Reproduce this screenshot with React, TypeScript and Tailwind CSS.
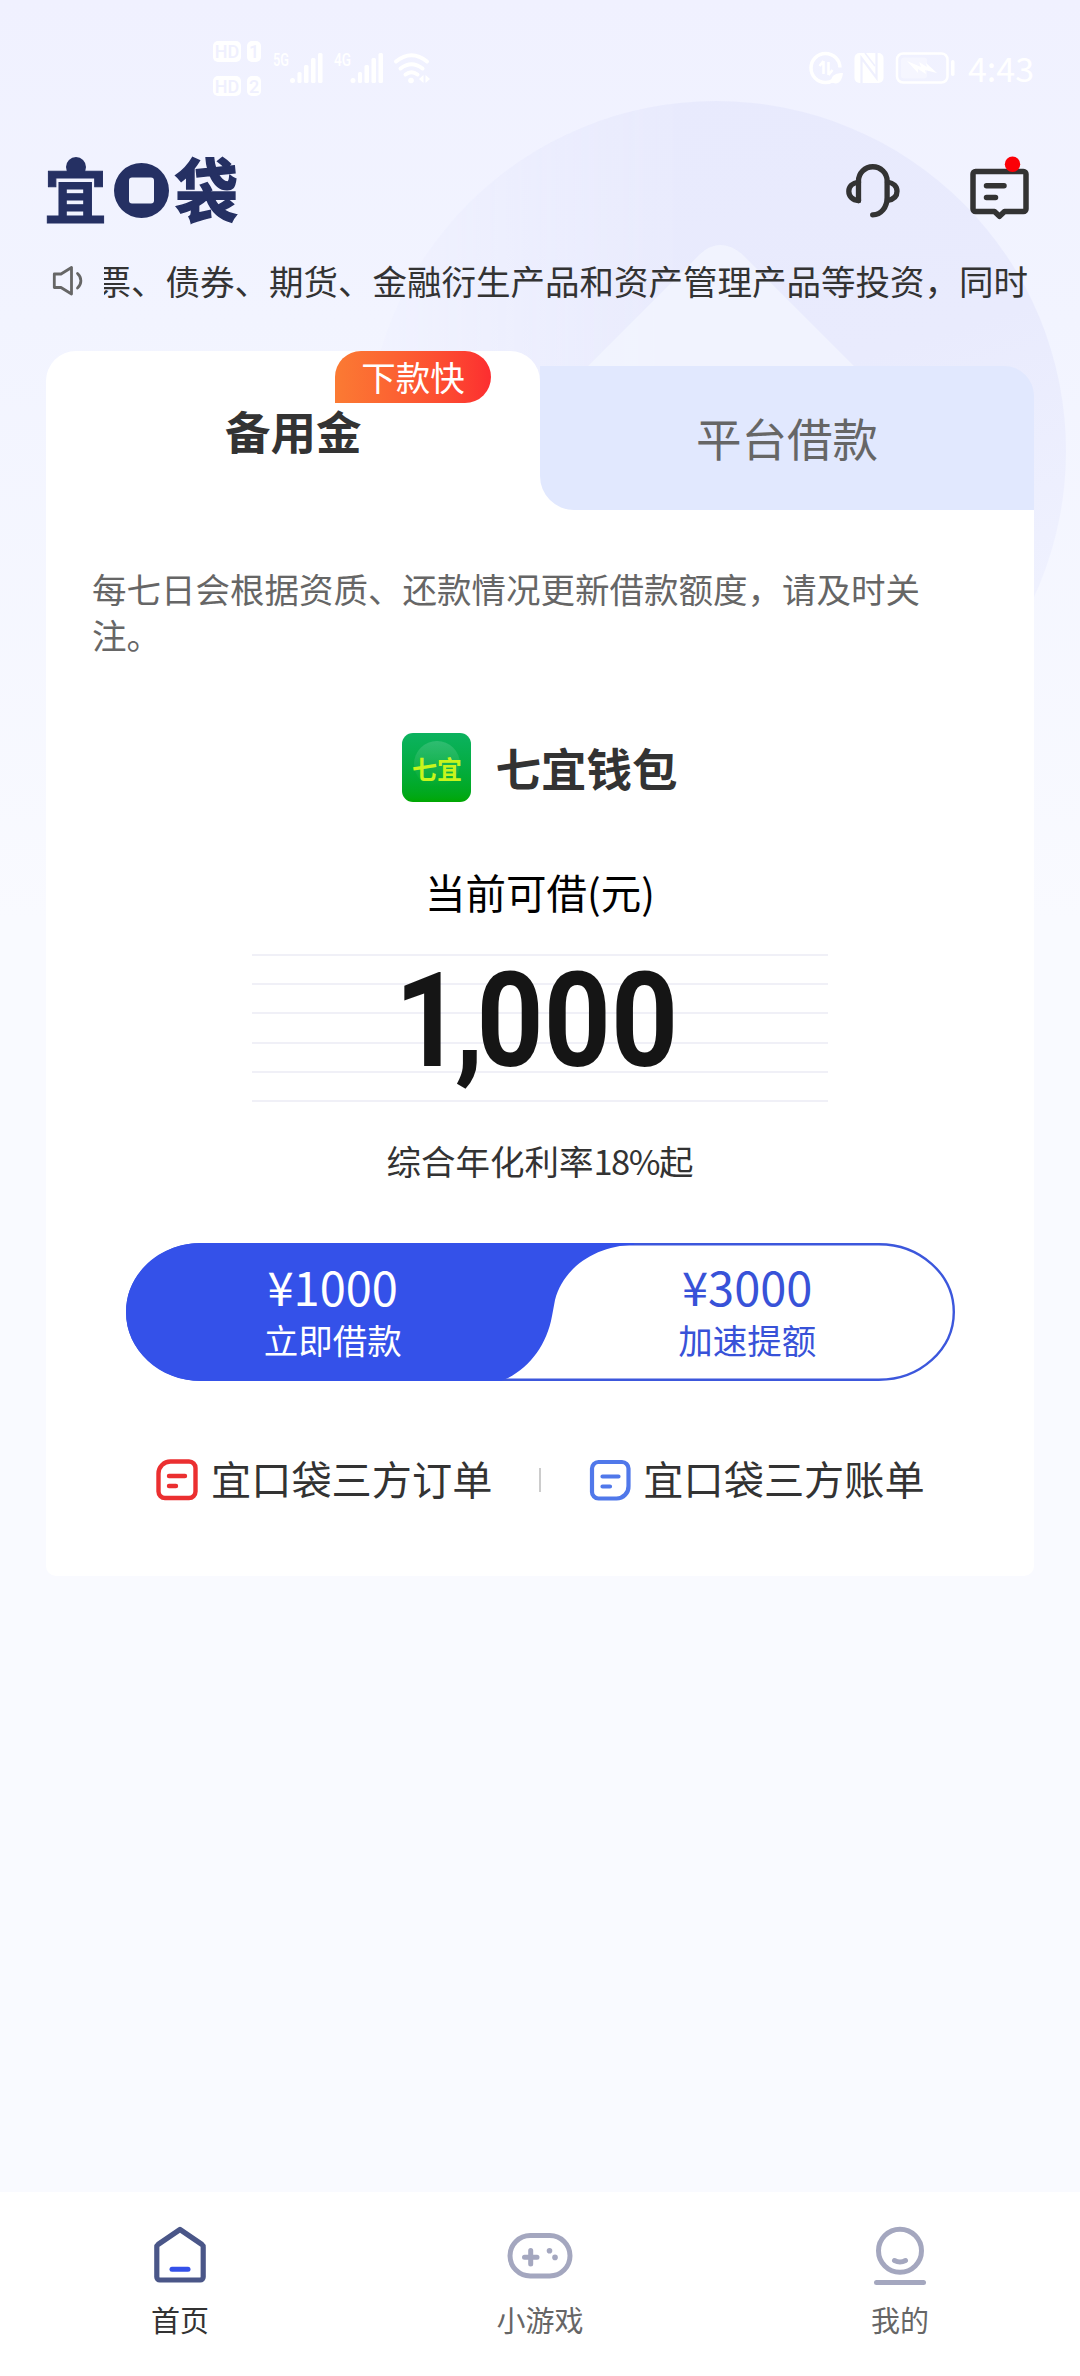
import { useState } from 'react';

type LoanTab = 'reserve' | 'platform';
type NavKey = 'home' | 'games' | 'mine';

const navItems: { key: NavKey; label: string }[] = [
  { key: 'home', label: '首页' },
  { key: 'games', label: '小游戏' },
  { key: 'mine', label: '我的' },
];

function SignalBars({ x }: { x: number }) {
  return (
    <g fill="white">
      <circle cx={x + 2.5} cy="80.5" r="2.5" />
      <rect x={x + 7.5} y="72" width="4" height="11" rx="1.5" />
      <rect x={x + 14} y="65" width="4.5" height="18" rx="1.5" />
      <rect x={x + 21} y="58" width="4.5" height="25" rx="1.5" />
      <rect x={x + 28} y="53" width="4.5" height="30" rx="1.5" />
    </g>
  );
}

function StatusBar() {
  return (
    <div className="flex h-[136px] shrink-0 items-center justify-between pl-[213px] pr-[46px]">
      <svg width="218" height="58" viewBox="213 39 218 58" className="font-['Roboto',sans-serif]">
        {/* HD 1 / HD 2 */}
        <g fill="white">
          <rect x="213" y="41" width="28" height="21" rx="5" />
          <rect x="247" y="41" width="14" height="21" rx="5" />
          <rect x="213" y="76" width="28" height="20" rx="5" />
          <rect x="247" y="76" width="14" height="20" rx="5" />
        </g>
        <g fill="#eff0fe" fontSize="18" fontWeight="500" textAnchor="middle">
          <text x="227" y="58">HD</text>
          <text x="254" y="58">1</text>
          <text x="227" y="92.5">HD</text>
          <text x="254" y="92.5">2</text>
        </g>
        <g fill="white" fontSize="18" fontWeight="500">
          <text x="273" y="66" textLength="16" lengthAdjust="spacingAndGlyphs">5G</text>
          <text x="334" y="66" textLength="17" lengthAdjust="spacingAndGlyphs">4G</text>
        </g>
        <SignalBars x={290} />
        <SignalBars x={350.5} />
        {/* wifi */}
        <g fill="none" stroke="white" strokeWidth="4" strokeLinecap="round">
          <path d="M396 61.5Q411.5 49 427 61.5" />
          <path d="M400.5 68.5Q411.5 60 422.5 68.5" />
          <path d="M405.5 74.5Q411.5 70 417.5 74.5" />
        </g>
        <circle cx="411" cy="80.5" r="2.8" fill="white" />
        <path d="M423.500 75v8l-4.500-4zM425.500 75v8l4.500-4z" fill="white" />
      </svg>

      <div className="flex items-center">
        <svg width="148" height="36" viewBox="808 50 148 36">
          <circle cx="825.5" cy="68" r="14.5" fill="none" stroke="white" strokeWidth="3.5" strokeDasharray="76 16" strokeDashoffset="-14" />
          <path d="M823.5 61v13M823.5 61l-4 5M828.5 75v-13M828.5 75l4-5" fill="none" stroke="white" strokeWidth="2.5" />
          <path d="M831 82c0-7 5-9 12-9-1 8-5 13-12 9z" fill="white" />
          <rect x="854.5" y="53" width="29" height="30" rx="5" fill="white" />
          <path d="M861.5 83V58L876.500 78V53" fill="none" stroke="#eff0fe" strokeWidth="2.2" />
          <path d="M865 53L875 66" fill="none" stroke="#eff0fe" strokeWidth="1.500" />
          <rect x="897" y="53.5" width="50.5" height="29" rx="6" fill="none" stroke="white" strokeWidth="2.5" />
          <rect x="901" y="57.5" width="26" height="21" rx="3" fill="white" opacity=".35" />
          <rect x="951" y="60" width="3.5" height="16" rx="1.7" fill="white" />
          <path d="M907 61l14 6-2-5 8 5-1-4 11 10-12-3 1 4-8-5v4z" fill="white" />
        </svg>
        <span className="ml-3 w-[66px] font-['Noto_Sans_CJK_SC',sans-serif] text-[34px] leading-[40px] text-white">4:43</span>
      </div>
    </div>
  );
}

function Logo() {
  return (
    <div aria-label="宜口袋" className="relative flex h-[70px] w-[190px] items-center justify-between text-[63px] font-bold leading-[70px] text-[#253063]">
      <span className="w-[60px] -indent-[2px] [-webkit-text-stroke:1px_#253063]">宜</span>
      <svg width="55" height="55" viewBox="0 0 55 55">
        <circle cx="27.5" cy="27.5" r="27.5" fill="#253063" />
        <rect x="15" y="14.5" width="25" height="26" rx="3" fill="#f0f2fe" />
      </svg>
      <span className="w-[60px] scale-y-110 -indent-[1px] pb-[6px] [-webkit-text-stroke:1.5px_#253063]">袋</span>
      {/* head of the little figure */}
      <span className="absolute left-[19.500px] top-[1px] size-5 rounded-full bg-[#253063]" />
    </div>
  );
}

function HeadsetIcon() {
  return (
    <svg width="54" height="54" viewBox="846 163.5 54 54" fill="none" stroke="#333" strokeWidth="5.3" strokeLinecap="round" strokeLinejoin="round">
      <path d="M858.5 200V180.5a14.3 14.3 0 0 1 28.6 0V197c0 10-6 17.3-14.4 17.3" />
      <path d="M858.5 181.5c-6 1-9.7 4.5-9.7 9.3s3.7 8.9 9.7 9.2" />
      <path d="M887.5 181.5c6 1 9.500 4.500 9.500 9.300s-3.500 8.200-9.500 9.200" />
    </svg>
  );
}

function MessageIcon() {
  return (
    <svg width="60" height="70" viewBox="970 155 60 70">
      <g fill="none" stroke="#333" strokeWidth="5.5" strokeLinecap="round" strokeLinejoin="round">
        <path d="M975.5 170.5H1023.5a2.5 2.5 0 0 1 2.5 2.5V208a2.5 2.5 0 0 1-2.5 2.5H1004.5L999.5 215.3L994.5 210.5H975.5a2.5 2.5 0 0 1-2.5-2.5V173a2.5 2.5 0 0 1 2.5-2.5z" />
        <path d="M986.5 184.7H1004M986.5 196.5H995.5" />
      </g>
      <circle cx="1012.5" cy="163.2" r="7.7" fill="#fb0007" />
    </svg>
  );
}

function SpeakerIcon() {
  return (
    <svg width="32" height="32" viewBox="52.5 266 32 32" fill="none" stroke="#666" strokeWidth="2.8" strokeLinecap="round" strokeLinejoin="round">
      <path d="M54.8 275h6.700l10.500-6.500v26.500l-10.500-6.500h-6.700z" />
      <path d="M78 274.5c4.500 4 4.500 10.500 0 14.500" />
    </svg>
  );
}

function OrderIcon() {
  return (
    <svg width="42" height="42" viewBox="0 0 42 42" fill="none" stroke="#eb2f30" strokeWidth="4.4" strokeLinecap="round">
      <path d="M14.500 2.500H33a6.500 6.500 0 0 1 6.500 6.500V32.500a6.500 6.500 0 0 1-6.500 6.500H9a6.500 6.500 0 0 1-6.500-6.500V14.500A12 12 0 0 1 14.500 2.500z" />
      <path d="M13 17H29M13 27H20" />
    </svg>
  );
}

function BillIcon() {
  return (
    <svg width="42" height="42" viewBox="0 0 42 42" fill="none" stroke="#5078ea" strokeWidth="4.2" strokeLinecap="round">
      <path d="M9.500 3H33a6.500 6.500 0 0 1 6.500 6.500V27A12 12 0 0 1 27.500 39.500H9.500A6.500 6.500 0 0 1 3 33V9.500A6.500 6.500 0 0 1 9.500 3z" />
      <path d="M13.500 17.500H29.500M13.500 27.500H21" />
    </svg>
  );
}

function NavIcon({ name }: { name: NavKey }) {
  if (name === 'home') {
    return (
      <svg width="64" height="64" viewBox="148 2224 64 64" fill="none" strokeLinecap="round" strokeLinejoin="round">
        <path d="M180 2229.5L202 2244.5a3 3 0 0 1 1.2 2.5V2277a3 3 0 0 1-3 3H159.8a3 3 0 0 1-3-3V2247a3 3 0 0 1 1.2-2.5z" stroke="#4a5688" strokeWidth="5.2" />
        <path d="M172 2269.3H188" stroke="#3451e9" strokeWidth="5" />
      </svg>
    );
  }
  if (name === 'games') {
    return (
      <svg width="68" height="64" viewBox="506 2224 68 64" fill="none" stroke="#a4a7bf" strokeWidth="5" strokeLinecap="round">
        <rect x="510" y="2235.5" width="60" height="40.5" rx="20.25" />
        <path d="M524.5 2257.2H537M530.7 2250.5V2264" />
        <circle cx="549.5" cy="2250.7" r="2.8" fill="#a4a7bf" stroke="none" />
        <circle cx="555" cy="2257.4" r="2.8" fill="#a4a7bf" stroke="none" />
      </svg>
    );
  }
  return (
    <svg width="64" height="64" viewBox="868 2224 64 64" fill="none" stroke="#a4a7bf" strokeWidth="5" strokeLinecap="round">
      <circle cx="900" cy="2250.8" r="21.5" />
      <path d="M894.5 2260.500Q900 2263.500 905.500 2260.500" />
      <path d="M876.5 2282.500H923.500" />
    </svg>
  );
}

function Backdrop() {
  return (
    <svg className="absolute left-0 top-0" width="1080" height="900" viewBox="0 0 1080 900">
      <defs>
        <linearGradient id="disc" x1=".3" y1="0" x2=".62" y2="1">
          <stop offset="0" stopColor="#e8eafd" />
          <stop offset=".45" stopColor="#e9ebfd" />
          <stop offset="1" stopColor="#f2f4ff" />
        </linearGradient>
        <linearGradient id="discFade" x1="0" y1="0" x2="1" y2="0">
          <stop offset="0" stopColor="#fff" stopOpacity=".1" />
          <stop offset=".45" stopColor="#fff" />
        </linearGradient>
        <mask id="discMask">
          <rect x="366" y="100" width="700" height="700" fill="url(#discFade)" />
        </mask>
      </defs>
      <circle cx="716" cy="451" r="350" fill="url(#disc)" mask="url(#discMask)" />
      <path d="M700 254Q720 236 742 254L900 412H542z" fill="#f2f4fe" opacity=".85" />
    </svg>
  );
}

export default function App() {
  const [tab, setTab] = useState<LoanTab>('reserve');
  const [nav, setNav] = useState<NavKey>('home');

  return (
    <div className="relative flex h-[2376px] w-[1080px] flex-col overflow-hidden bg-[linear-gradient(180deg,#f0f1ff_0px,#f2f4ff_320px,#f9faff_920px,#f9faff_100%)] font-['Noto_Sans_CJK_SC',sans-serif] text-[#333]">
      <Backdrop />

      <div className="relative flex flex-1 flex-col">
        <StatusBar />

        {/* Header */}
        <header className="flex h-[109px] shrink-0 items-center justify-between pl-[46px] pr-[50px]">
          <Logo />
          <div className="flex items-center gap-[70px]">
            <HeadsetIcon />
            <MessageIcon />
          </div>
        </header>

        {/* Notice */}
        <div className="flex h-[72px] shrink-0 items-center pl-[52px] pr-[52px]">
          <SpeakerIcon />
          <div className="ml-5 flex flex-1 overflow-hidden whitespace-nowrap text-[34.5px] leading-[68px]">
            <span className="-ml-[7.5px] -mt-[3px]">票、债券、期货、金融衍生产品和资产管理产品等投资，同时</span>
          </div>
        </div>

        {/* Loan card */}
        <main className="mx-[46px] mt-[34px]">
          <div className="flex h-[159px]">
            <button onClick={() => setTab('reserve')} className="relative w-[494px] rounded-t-[30px] bg-white">
              <span className={`absolute left-[179px] top-[49px] text-[45.5px] leading-[60px] ${tab === 'reserve' ? 'font-bold' : ''}`}>备用金</span>
              <span className="absolute left-[289px] top-0 flex h-[52px] w-[156px] items-center justify-center rounded-[26px] rounded-bl-none bg-linear-to-r from-[#fb7a33] to-[#fc2d30] pb-[2px] text-[34.5px] leading-none text-white">
                下款快
              </span>
            </button>
            <div className="mt-[15px] h-[144px] w-[494px] bg-linear-to-tr from-white from-30% to-transparent to-30%">
              <button onClick={() => setTab('platform')} className="flex h-full w-full items-center justify-center rounded-bl-[34px] rounded-tr-[30px] bg-[#e1e8fe] pb-[3px] text-[45.5px] leading-[60px] text-[#666]">
                平台借款
              </button>
            </div>
          </div>

          <section className="flex h-[1066px] flex-col items-center rounded-b-[10px] bg-white pt-[55px]">
            <p className="ml-[46px] w-[850px] self-start text-[34.5px] leading-[46px] text-[#666]">
              每七日会根据资质、还款情况更新借款额度，请及时关注。
            </p>

            <div className="mt-[76px] flex h-[69px] items-center">
              <div className="relative flex size-[69px] items-center justify-center overflow-hidden rounded-[11px] bg-linear-to-b from-[#0cb25f] to-[#00a700]">
                <span className="absolute left-3 top-2 size-[46px] rounded-full bg-linear-to-b from-white/15 to-transparent" />
                <span className="relative text-[25px] font-bold leading-[30px] text-[#c8f51c]">七宜</span>
              </div>
              <span className="-mt-[2px] ml-6 text-[45.5px] font-bold leading-[60px]">七宜钱包</span>
            </div>

            <div className="mt-[60px] mb-px text-[40.5px] leading-[60px] text-black">当前可借(元)</div>

            <div className="relative mt-[31px] h-[148px] w-[576px]">
              <div className="flex h-full flex-col justify-between">
                {[0, 1, 2, 3, 4, 5].map((line) => (
                  <div key={line} className="h-[2px] bg-[#f0f0f7]" />
                ))}
              </div>
              <div className="absolute inset-x-0 -top-[7px] flex origin-center scale-x-[0.887] items-center justify-center pr-2 font-['Roboto',sans-serif] text-[132px] font-bold leading-[148px] text-[#151515]">
                <span className="tracking-[-8px]">1,</span>
                <span>000</span>
              </div>
            </div>

            <div className="mt-[33px] text-[34.5px] leading-[50px]">
              综合年化利率<span className="tracking-[-1.5px]">18%</span>起
            </div>

            {/* Split action button */}
            <div className="relative mt-[58px] h-[138px] w-[829px]">
              <svg className="absolute inset-0" width="829" height="138" viewBox="125 1243 829 138">
                <rect x="126.2" y="1244.2" width="826.6" height="135.6" rx="75" ry="67.8" fill="white" stroke="#3c57dc" strokeWidth="2.4" />
                <path d="M200 1243H633V1245C595 1245 562 1268 554 1300L551 1316C546 1344 530 1366 507 1378L500 1381H200C158 1381 125 1350 125 1312S158 1243 200 1243z" fill="#3451e9" />
              </svg>
              <div className="relative grid h-full grid-cols-2 pt-[17px] text-center">
                <button className="flex flex-col items-center text-white">
                  <span className="text-[47px] leading-[52px]">¥1000</span>
                  <span className="mt-1 text-[34.5px] leading-[46px]">立即借款</span>
                </button>
                <button className="flex flex-col items-center text-[#3852d8]">
                  <span className="text-[47px] leading-[52px]">¥3000</span>
                  <span className="mt-1 text-[34.5px] leading-[46px]">加速提额</span>
                </button>
              </div>
            </div>

            <div className="mt-[69px] flex h-[60px] items-center self-start pl-[110px] text-[40.2px] leading-[60px]">
              <OrderIcon />
              <span className="ml-[13px] -mt-1">宜口袋三方订单</span>
              <span className="ml-[47px] h-6 w-[2px] bg-[#ccc]" />
              <span className="ml-[48px]"><BillIcon /></span>
              <span className="ml-3 -mt-1">宜口袋三方账单</span>
            </div>
          </section>
        </main>
      </div>

      {/* Bottom navigation */}
      <nav className="relative grid h-[184px] shrink-0 grid-cols-3 bg-white pt-8">
        {navItems.map((item) => (
          <button key={item.key} onClick={() => setNav(item.key)} className="flex flex-col items-center">
            <NavIcon name={item.key} />
            <span className={`mt-[11px] text-[29px] leading-[40px] ${nav === item.key ? 'text-[#333]' : 'text-[#666]'}`}>
              {item.label}
            </span>
          </button>
        ))}
      </nav>
    </div>
  );
}
